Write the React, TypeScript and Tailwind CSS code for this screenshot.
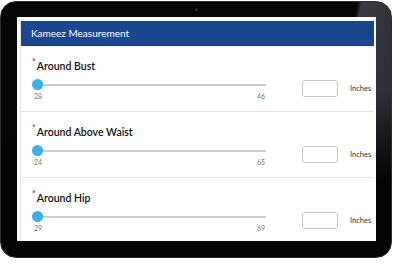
import React from "react";

const rows = [
  { label: "Around Bust", min: 28, max: 46 },
  { label: "Around Above Waist", min: 24, max: 65 },
  { label: "Around Hip", min: 29, max: 69 },
];

function Row({ label, min, max }: { label: string; min: number; max: number }) {
  return (
    <div className="h-[66px] shrink-0 border-b border-[#e4e4e4] pl-[11px] pt-[13px]">
      <div className="flex h-[14px] items-start font-['Lato',sans-serif] text-[10.5px] font-semibold leading-[14px] text-[#111]">
        <span className="mr-[1px] mt-[-2px] text-[9px] font-bold leading-[10px] text-[#e0158c]">*</span>
        <span>{label}</span>
      </div>
      <div className="mt-[6px] flex items-start">
        <div className="w-[234px]">
          <div className="relative h-[11px]">
            <div className="absolute left-[5px] right-0 top-[5px] h-[1.5px] bg-[#cdcdcd]" />
            <div className="absolute left-0 top-0 h-[11px] w-[11px] rounded-full bg-[#38b0ef]" />
          </div>
          <div className="mt-[2px] flex justify-between pl-[2px] pr-[1px] font-['Lato',sans-serif] text-[7px] leading-[8px] text-[#777]">
            <span>{min}</span>
            <span>{max}</span>
          </div>
        </div>
        <div className="ml-[36px] mt-[1px] h-[17px] w-[36px] rounded-[3px] border border-[#c6c6c6] bg-white" />
        <span className="ml-[12px] mt-[1px] font-['Lato',sans-serif] text-[7.5px] leading-[17px] text-[#333]">
          Inches
        </span>
      </div>
    </div>
  );
}

export default function App() {
  return (
    <div className="h-[264px] w-[393px] overflow-hidden bg-white">
      <div className="relative mt-[1px] h-[257px] w-[392px] rounded-[16px] border border-[#2e2e2e] bg-[linear-gradient(to_bottom,transparent_35%,#050505_70%),linear-gradient(100deg,#060606_82%,#3a3b42_83%,#23242d_100%)] pb-[16px] pl-[16px] pr-[15px] pt-[15px]">
        <div className="absolute left-[194px] top-[6px] h-[3px] w-[3px] rounded-full bg-[#2a2a2a]" />
        <div className="h-full w-full overflow-hidden bg-white pl-[3px] pr-[2px] pt-[4px]">
          <div className="flex h-full flex-col border-l border-[#e6e6e6]">
            <div className="flex h-[25px] shrink-0 items-center border-b border-[#143a7a] bg-[#1b4690] pl-[10px] font-['Lato',sans-serif] text-[10px] text-white">
              Kameez Measurement
            </div>
            {rows.map((r) => (
              <Row key={r.label} {...r} />
            ))}
          </div>
        </div>
      </div>
    </div>
  );
}
